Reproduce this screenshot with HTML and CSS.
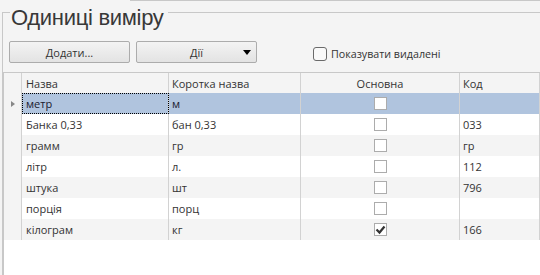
FILE: index.html
```html
<!DOCTYPE html>
<html lang="uk">
<head>
    <meta charset="UTF-8">
    <meta name="viewport" content="width=device-width, initial-scale=1.0">
    <title>Одиниці виміру</title>
    <link rel="stylesheet" href="styles.css">
</head>
<body>
    <div class="tabline"></div>
    <section class="panel">
        <div class="panel-head">
            <span class="panel-edge"></span>
            <h1 class="panel-title">Одиниці виміру</h1>
            <span class="panel-rule"></span>
        </div>
        <div class="panel-body">
            <div class="toolbar">
                <button class="btn">Додати...</button>
                <button class="btn btn-menu">Дії<span class="caret"></span></button>
                <label class="show-deleted"><span class="show-box"></span>Показувати видалені</label>
            </div>
            <div class="grid">
                <div class="row row-head">
                    <div class="cell cell-ind"></div>
                    <div class="cell cell-name">Назва</div>
                    <div class="cell">Коротка назва</div>
                    <div class="cell cell-center">Основна</div>
                    <div class="cell">Код</div>
                </div>
                <div class="row selected">
                    <div class="cell cell-ind"><span class="pointer"></span></div>
                    <div class="cell cell-name focused">метр</div>
                    <div class="cell">м</div>
                    <div class="cell cell-center"><span class="tick"></span></div>
                    <div class="cell"></div>
                </div>
                <div class="row">
                    <div class="cell cell-ind"></div>
                    <div class="cell cell-name">Банка 0,33</div>
                    <div class="cell">бан 0,33</div>
                    <div class="cell cell-center"><span class="tick"></span></div>
                    <div class="cell">033</div>
                </div>
                <div class="row alt">
                    <div class="cell cell-ind"></div>
                    <div class="cell cell-name">грамм</div>
                    <div class="cell">гр</div>
                    <div class="cell cell-center"><span class="tick"></span></div>
                    <div class="cell">гр</div>
                </div>
                <div class="row">
                    <div class="cell cell-ind"></div>
                    <div class="cell cell-name">літр</div>
                    <div class="cell">л.</div>
                    <div class="cell cell-center"><span class="tick"></span></div>
                    <div class="cell">112</div>
                </div>
                <div class="row alt">
                    <div class="cell cell-ind"></div>
                    <div class="cell cell-name">штука</div>
                    <div class="cell">шт</div>
                    <div class="cell cell-center"><span class="tick"></span></div>
                    <div class="cell">796</div>
                </div>
                <div class="row">
                    <div class="cell cell-ind"></div>
                    <div class="cell cell-name">порція</div>
                    <div class="cell">порц</div>
                    <div class="cell cell-center"><span class="tick"></span></div>
                    <div class="cell"></div>
                </div>
                <div class="row alt">
                    <div class="cell cell-ind"></div>
                    <div class="cell cell-name">кілограм</div>
                    <div class="cell">кг</div>
                    <div class="cell cell-center">
                        <span class="tick checked">
                            <svg width="11" height="11" viewBox="0 0 11 11"><path d="M1.5 5.5 4.5 8.5 9.5 2.5" fill="none" stroke="#333" stroke-width="2.2"/></svg>
                        </span>
                    </div>
                    <div class="cell">166</div>
                </div>
            </div>
        </div>
    </section>
</body>
</html>
```

FILE: styles.css
```css
body, html {
    margin: 0;
    padding: 0;
    height: 100%;
    overflow: hidden;
}
body {
    background: #f4f4f4;
    font-family: 'Open Sans', sans-serif;
    font-size: 11px;
    color: #333;
}
.tabline {
    margin-left: 130px;
    border-top: 1px solid #c8c8c8;
}
.panel {
    margin-left: 2px;
}
.panel-head {
    display: flex;
    height: 34px;
}
.panel-edge {
    width: 7px;
    margin-top: 11px;
    border-top: 1px solid #c8c8c8;
    border-left: 1px solid #c8c8c8;
}
.panel-title {
    margin: 0;
    padding: 0 4px 0 1px;
    font-family: 'Liberation Sans', sans-serif;
    font-size: 22px;
    line-height: 34px;
    letter-spacing: -0.3px;
    font-weight: normal;
    color: #383838;
}
.panel-rule {
    flex-grow: 1;
    margin-top: 11px;
    border-top: 1px solid #c8c8c8;
}
.panel-body {
    border-left: 1px solid #c8c8c8;
    height: 240px;
}
.toolbar {
    display: flex;
    align-items: center;
    padding: 6px 0 9px 6px;
}
.btn {
    position: relative;
    width: 121px;
    height: 22px;
    padding: 0;
    border: 1px solid #acacac;
    border-radius: 2px;
    background: linear-gradient(to bottom, #f3f3f3, #e3e3e3);
    font-family: inherit;
    font-size: 11px;
    color: #333;
}
.btn + .btn {
    margin-left: 6px;
}
.caret {
    position: absolute;
    right: 5px;
    top: 8px;
    border-left: 4px solid transparent;
    border-right: 4px solid transparent;
    border-top: 5px solid #000;
}
.show-deleted {
    display: flex;
    align-items: center;
    margin-left: 56px;
    margin-top: 4px;
    font-size: 10.7px;
}
.show-box {
    width: 12px;
    height: 12px;
    margin-right: 4px;
    border: 1px solid #6a6a6a;
    border-radius: 3px;
    background: #f9f9f9;
}
.grid {
    height: 203px;
    background: #fff;
    border-left: 1px solid #c8c8c8;
    border-top: 1px solid #c8c8c8;
}
.row {
    display: grid;
    grid-template-columns: 18px 147px 132px 159px 1fr;
    height: 21px;
}
.row-head {
    height: 20px;
    background: #f4f4f4;
}
.row.alt {
    background: #f4f4f4;
}
.row.selected {
    background: #b0c4de;
    color: #1a1a2e;
}
.cell {
    display: flex;
    align-items: center;
    box-sizing: border-box;
    padding: 0 3px;
    border-right: 1px solid #d2d2d2;
    white-space: nowrap;
    overflow: hidden;
}
.cell-name {
    padding-left: 4px;
}
.cell-center {
    justify-content: center;
}
.cell-ind {
    background: #f4f4f4;
    justify-content: center;
}
.focused {
    outline: 1px dotted #000;
    outline-offset: -1px;
}
.pointer {
    border-left: 4px solid #888;
    border-top: 3px solid transparent;
    border-bottom: 3px solid transparent;
}
.tick {
    display: flex;
    align-items: center;
    justify-content: center;
    width: 11px;
    height: 11px;
    border: 1px solid #acacac;
    background: #fff;
}
.tick svg {
    display: block;
}
```
